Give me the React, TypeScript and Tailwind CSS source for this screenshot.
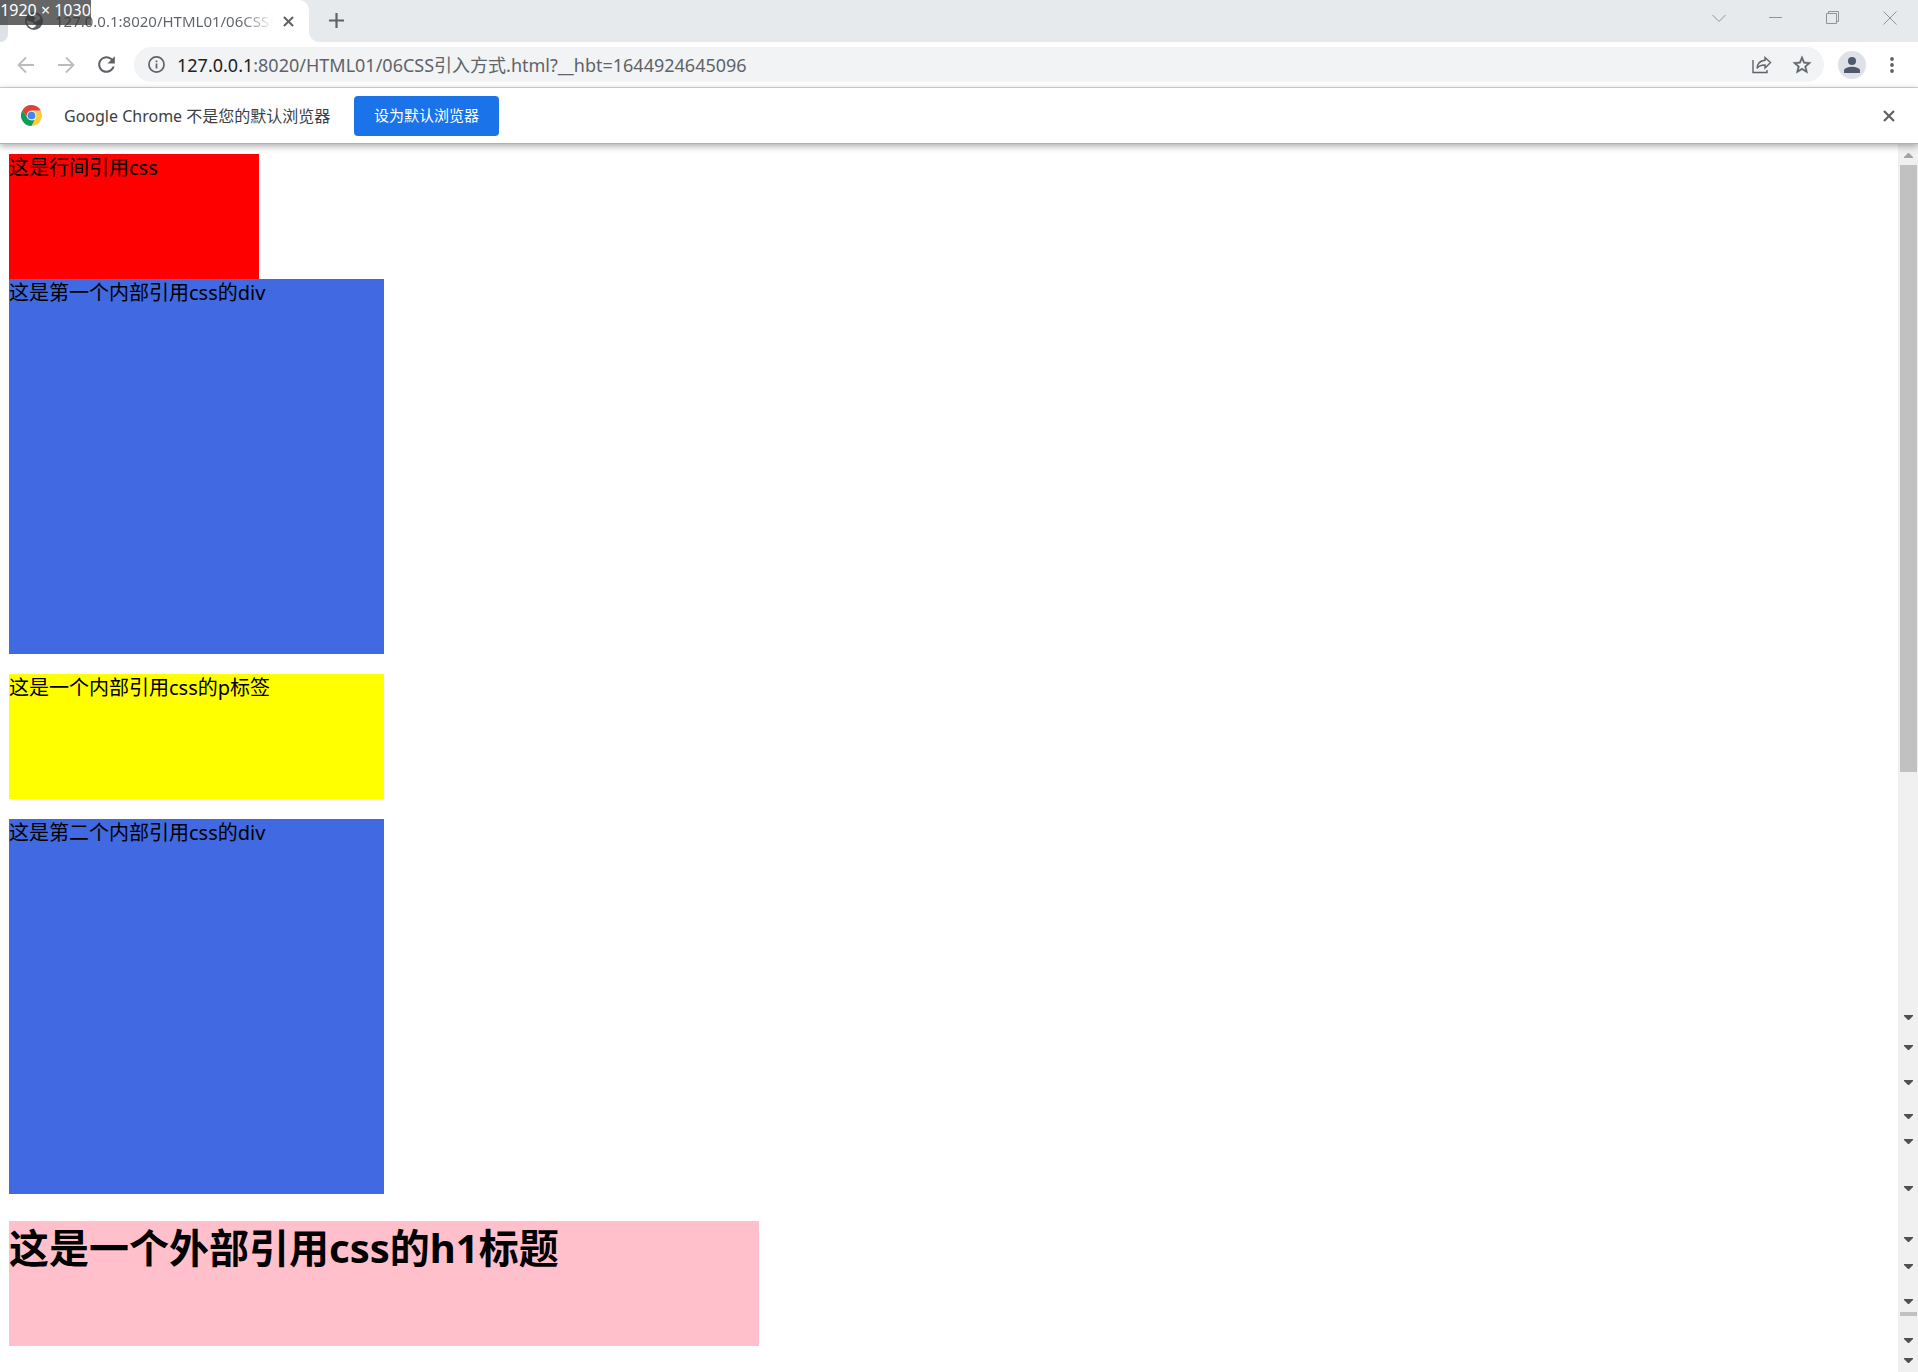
import type { ReactNode } from 'react';

const blocks = [
  { tag: 'div', text: '这是行间引用css', style: 'h-[125px] w-[250px] bg-[#ff0000]' },
  { tag: 'div', text: '这是第一个内部引用css的div', style: 'h-[375px] w-[375px] bg-[#4169e1]' },
  { tag: 'p', text: '这是一个内部引用css的p标签', style: 'my-5 h-[125px] w-[375px] bg-[#ffff00]' },
  { tag: 'div', text: '这是第二个内部引用css的div', style: 'h-[375px] w-[375px] bg-[#4169e1]' },
] as const;

const scrollMarks = ['mt-[243px]', 'mt-[25px]', 'mt-[30px]', 'mt-[29px]', 'mt-5', 'mt-[42px]', 'mt-[46px]', 'mt-[22px]', 'mt-[30px]'];

function IconButton({ label, className, children }: { label: string; className: string; children: ReactNode }) {
  return (
    <button type="button" aria-label={label} className={`flex shrink-0 items-center justify-center ${className}`}>
      {children}
    </button>
  );
}

function Cross({ className }: { className: string }) {
  return (
    <svg viewBox="0 0 12 12" className={className} fill="none" stroke="currentColor" strokeWidth="2.2">
      <path d="M1 1l10 10M11 1L1 11" />
    </svg>
  );
}

function DownMark({ className = '' }: { className?: string }) {
  return (
    <svg viewBox="0 0 9 5" className={`h-[5px] w-[9px] shrink-0 ${className}`} fill="#505050">
      <path d="M0 0h9v1L5 5H4L0 1z" />
    </svg>
  );
}

function ChromeLogo() {
  return (
    <svg viewBox="0 0 48 48" className="h-[21px] w-[21px] shrink-0">
      <path d="M3.2 12L14.5 29.5L24 13H45.3A24 24 0 0 0 3.2 12z" fill="#db4437" />
      <path d="M3.2 12L14.5 29.5L24 35H33L24 48A24 24 0 0 1 3.2 12z" fill="#0f9d58" />
      <path d="M33.5 29.5L24 48A24 24 0 0 0 45.3 13H24z" fill="#ffcd40" />
      <circle cx="24" cy="24" r="11" fill="#f1f1f1" />
      <circle cx="24" cy="24" r="8.8" fill="#4285f4" />
    </svg>
  );
}

function TabStrip() {
  return (
    <div className="flex h-[42px] bg-white">
      <div className="w-2 shrink-0 rounded-br-lg bg-[#dee1e6]" />
      <div className="w-[301px] shrink-0 bg-[#e6eaed]">
        <div className="flex h-full items-center rounded-t-[10px] bg-white pr-[15px] pl-[17px]">
          <svg viewBox="0 0 24 24" className="h-[18px] w-[18px] shrink-0">
            <circle cx="12" cy="12" r="12" fill="#5f6368" />
            <path d="M2 11c3 0 4 2 7 2 2 0 2 3 4 3s2 3 0 4-3 2-5 1C4 19 2 15 2 11zM13 3c3 0 6 2 8 5-1 3-4 2-5 4s-4 1-4-1 3-1 2-3-3-1-3-3 1-2 2-2z" fill="#fff" />
          </svg>
          <span className="ml-3 w-[219px] overflow-hidden bg-gradient-to-r from-[#5f6368] from-85% to-transparent bg-clip-text text-[15px] leading-5 whitespace-nowrap text-transparent">
            127.0.0.1:8020/HTML01/06CSS引入方式
          </span>
          <IconButton label="关闭标签页" className="ml-auto h-5 w-3 text-[#5f6368]">
            <Cross className="h-[11px] w-[11px]" />
          </IconButton>
        </div>
      </div>
      <div className="flex min-w-0 flex-1 items-start rounded-bl-[10px] bg-[#e6eaed]">
        <IconButton label="打开新的标签页" className="ml-[17px] h-10 w-5 text-[#5f6368]">
          <svg viewBox="0 0 15 15" className="h-[15px] w-[15px]" stroke="currentColor" strokeWidth="2.2">
            <path d="M7.5 0v15M0 7.5h15" />
          </svg>
        </IconButton>
        <div className="ml-auto flex text-[#909498]">
          <IconButton label="搜索标签页" className="h-[35px] w-[57px]">
            <svg viewBox="0 0 14 14" className="h-[14px] w-[14px]" fill="none" stroke="currentColor">
              <path d="M.5 4L7 10.5 13.5 4" />
            </svg>
          </IconButton>
          <IconButton label="最小化" className="h-[35px] w-[57px]">
            <svg viewBox="0 0 14 14" className="h-[14px] w-[14px]" stroke="currentColor">
              <path d="M0 6.5h13" />
            </svg>
          </IconButton>
          <IconButton label="还原" className="h-[35px] w-[57px]">
            <svg viewBox="0 0 14 14" className="h-[14px] w-[14px]" fill="none" stroke="currentColor">
              <path d="M.5 2.500h10v10H.5zM2.500 2V.5h10v10H11" />
            </svg>
          </IconButton>
          <IconButton label="关闭" className="h-[35px] w-[57px]">
            <svg viewBox="0 0 14 14" className="h-[14px] w-[14px]" fill="none" stroke="currentColor">
              <path d="M.5.5l13 13M13.5.5l-13 13" />
            </svg>
          </IconButton>
        </div>
      </div>
    </div>
  );
}

function Toolbar() {
  return (
    <div className="flex h-[46px] items-center border-b border-[#d5d7da] bg-white pr-4 pl-[14px] text-[#5f6368]">
      <IconButton label="后退" className="h-6 w-6 text-[#babcbe]">
        <svg viewBox="0 0 24 24" className="h-6 w-6" fill="none" stroke="currentColor" strokeWidth="1.8">
          <path d="M20 12H5M12 4.5L4.5 12l7.5 7.5" />
        </svg>
      </IconButton>
      <IconButton label="前进" className="ml-4 h-6 w-6 text-[#babcbe]">
        <svg viewBox="0 0 24 24" className="h-6 w-6" fill="none" stroke="currentColor" strokeWidth="1.8">
          <path d="M4 12h15M12 4.5l7.5 7.5-7.5 7.5" />
        </svg>
      </IconButton>
      <IconButton label="重新加载" className="ml-4 h-6 w-6">
        <svg viewBox="0 0 24 24" className="h-[25px] w-[25px] shrink-0" fill="currentColor">
          <path d="M17.65 6.35C16.2 4.9 14.21 4 12 4c-4.42 0-7.99 3.58-7.99 8s3.57 8 7.99 8c3.73 0 6.84-2.55 7.73-6h-2.08c-.82 2.33-3.04 4-5.65 4-3.31 0-6-2.69-6-6s2.69-6 6-6c1.66 0 3.14.69 4.22 1.78L13 11h7V4l-2.35 2.35z" />
        </svg>
      </IconButton>
      <div className="ml-4 flex h-[35px] min-w-0 flex-1 items-center rounded-full bg-[#f1f3f4] pr-3 pl-[14px]">
        <svg viewBox="0 0 16 16" className="h-[17px] w-[17px] shrink-0" fill="none" stroke="currentColor" strokeWidth="1.6">
          <circle cx="8" cy="8" r="7.1" />
          <path d="M8 7v4.8M8 4.2v1.7" />
        </svg>
        <a href="#page" className="ml-3 truncate text-lg leading-6">
          <span className="text-[#202124]">127.0.0.1</span>:8020/HTML01/06CSS引入方式.html?__hbt=1644924645096
        </a>
        <IconButton label="分享此网页" className="ml-auto h-6 w-5">
          <svg viewBox="0 0 20 18" className="h-[18px] w-5" fill="none" stroke="currentColor" strokeWidth="1.4">
            <path d="M1 4v12.500h14V14" />
            <path d="M13 1.500l5.500 5-5.500 5.500V9c-4 0-6.500 1-8 3.500C5.300 8 8 4.800 13 4.300z" />
          </svg>
        </IconButton>
        <IconButton label="为此标签页添加书签" className="ml-5 h-6 w-5">
          <svg viewBox="0 0 24 24" className="h-[22px] w-[22px] shrink-0" fill="currentColor" stroke="currentColor" strokeWidth=".4">
            <path d="M22 9.24l-7.19-.62L12 2 9.19 8.63 2 9.24l5.46 4.73L5.82 21 12 17.27 18.18 21l-1.63-7.03L22 9.24zM12 15.4l-3.76 2.27 1-4.28-3.32-2.88 4.38-.38L12 6.1l1.71 4.04 4.38.38-3.32 2.88 1 4.28L12 15.4z" />
          </svg>
        </IconButton>
      </div>
      <IconButton label="个人资料" className="ml-[14px] h-7 w-7 rounded-full bg-[#dee1e8] text-[#50596c]">
        <svg viewBox="0 0 16 16" className="h-4 w-4" fill="currentColor">
          <circle cx="8" cy="4" r="4" />
          <path d="M0 16v-2.5C0 11 5 9.8 8 9.8s8 1.2 8 3.7V16z" />
        </svg>
      </IconButton>
      <IconButton label="自定义及控制" className="ml-4 h-6 w-5">
        <svg viewBox="0 0 4 16" className="h-4 w-1" fill="currentColor">
          <circle cx="2" cy="2" r="1.9" />
          <circle cx="2" cy="8" r="1.9" />
          <circle cx="2" cy="14" r="1.9" />
        </svg>
      </IconButton>
    </div>
  );
}

function InfoBar() {
  return (
    <div className="relative flex h-14 items-center border-b border-[#b0b0b0] bg-white pr-[23px] pl-[21px] shadow-[0_2px_7px_rgba(0,0,0,0.35)]">
      <ChromeLogo />
      <p className="ml-[22px] w-[274px] text-base leading-6 text-[#3c4043]">Google Chrome 不是您的默认浏览器</p>
      <button type="button" className="ml-4 h-10 w-[145px] rounded bg-[#1a73e8] text-[15px] text-white">
        设为默认浏览器
      </button>
      <IconButton label="关闭" className="ml-auto h-6 w-3 text-[#5f6368]">
        <Cross className="h-3 w-3" />
      </IconButton>
    </div>
  );
}

function ScrollBar() {
  return (
    <div className="flex w-5 shrink-0 flex-col items-center bg-[#f0f0f0] pt-[9px]">
      <svg viewBox="0 0 9 5" className="h-[5px] w-[9px] shrink-0" fill="#a3a3a3">
        <path d="M0 5h9V4L5 0H4L0 4z" />
      </svg>
      <div className="mt-[7px] h-[607px] w-[17px] shrink-0 bg-[#c1c1c1]" />
      {scrollMarks.map((gap, i) => (
        <DownMark key={i} className={gap} />
      ))}
      <div className="mt-2 h-1 w-[17px] shrink-0 bg-[#c1c1c1]" />
      <DownMark className="mt-[22px]" />
      <DownMark className="mt-[15px]" />
    </div>
  );
}

export default function App() {
  return (
    <div className="relative flex min-h-screen flex-col bg-white font-['Noto_Sans','Noto_Sans_CJK_SC',sans-serif]">
      <header className="relative z-10">
        <TabStrip />
        <Toolbar />
        <InfoBar />
      </header>

      <div className="flex flex-1">
        <main id="page" className="min-w-0 flex-1 px-[9px] pt-[10px] text-black">
          {blocks.map(({ tag: Tag, text, style }) => (
            <Tag key={text} className={`text-xl leading-7 ${style}`}>{text}</Tag>
          ))}
          <h1 className="mt-[27px] h-[125px] w-[750px] bg-[#ffc0cb] text-[40px] leading-[54px] font-bold">这是一个外部引用css的h1标题</h1>
        </main>
        <ScrollBar />
      </div>

      <div className="absolute top-0 left-0 z-20 flex h-[25px] w-[91px] justify-center bg-[#333333]/75 text-base leading-5 whitespace-nowrap text-white">1920 × 1030</div>
    </div>
  );
}
